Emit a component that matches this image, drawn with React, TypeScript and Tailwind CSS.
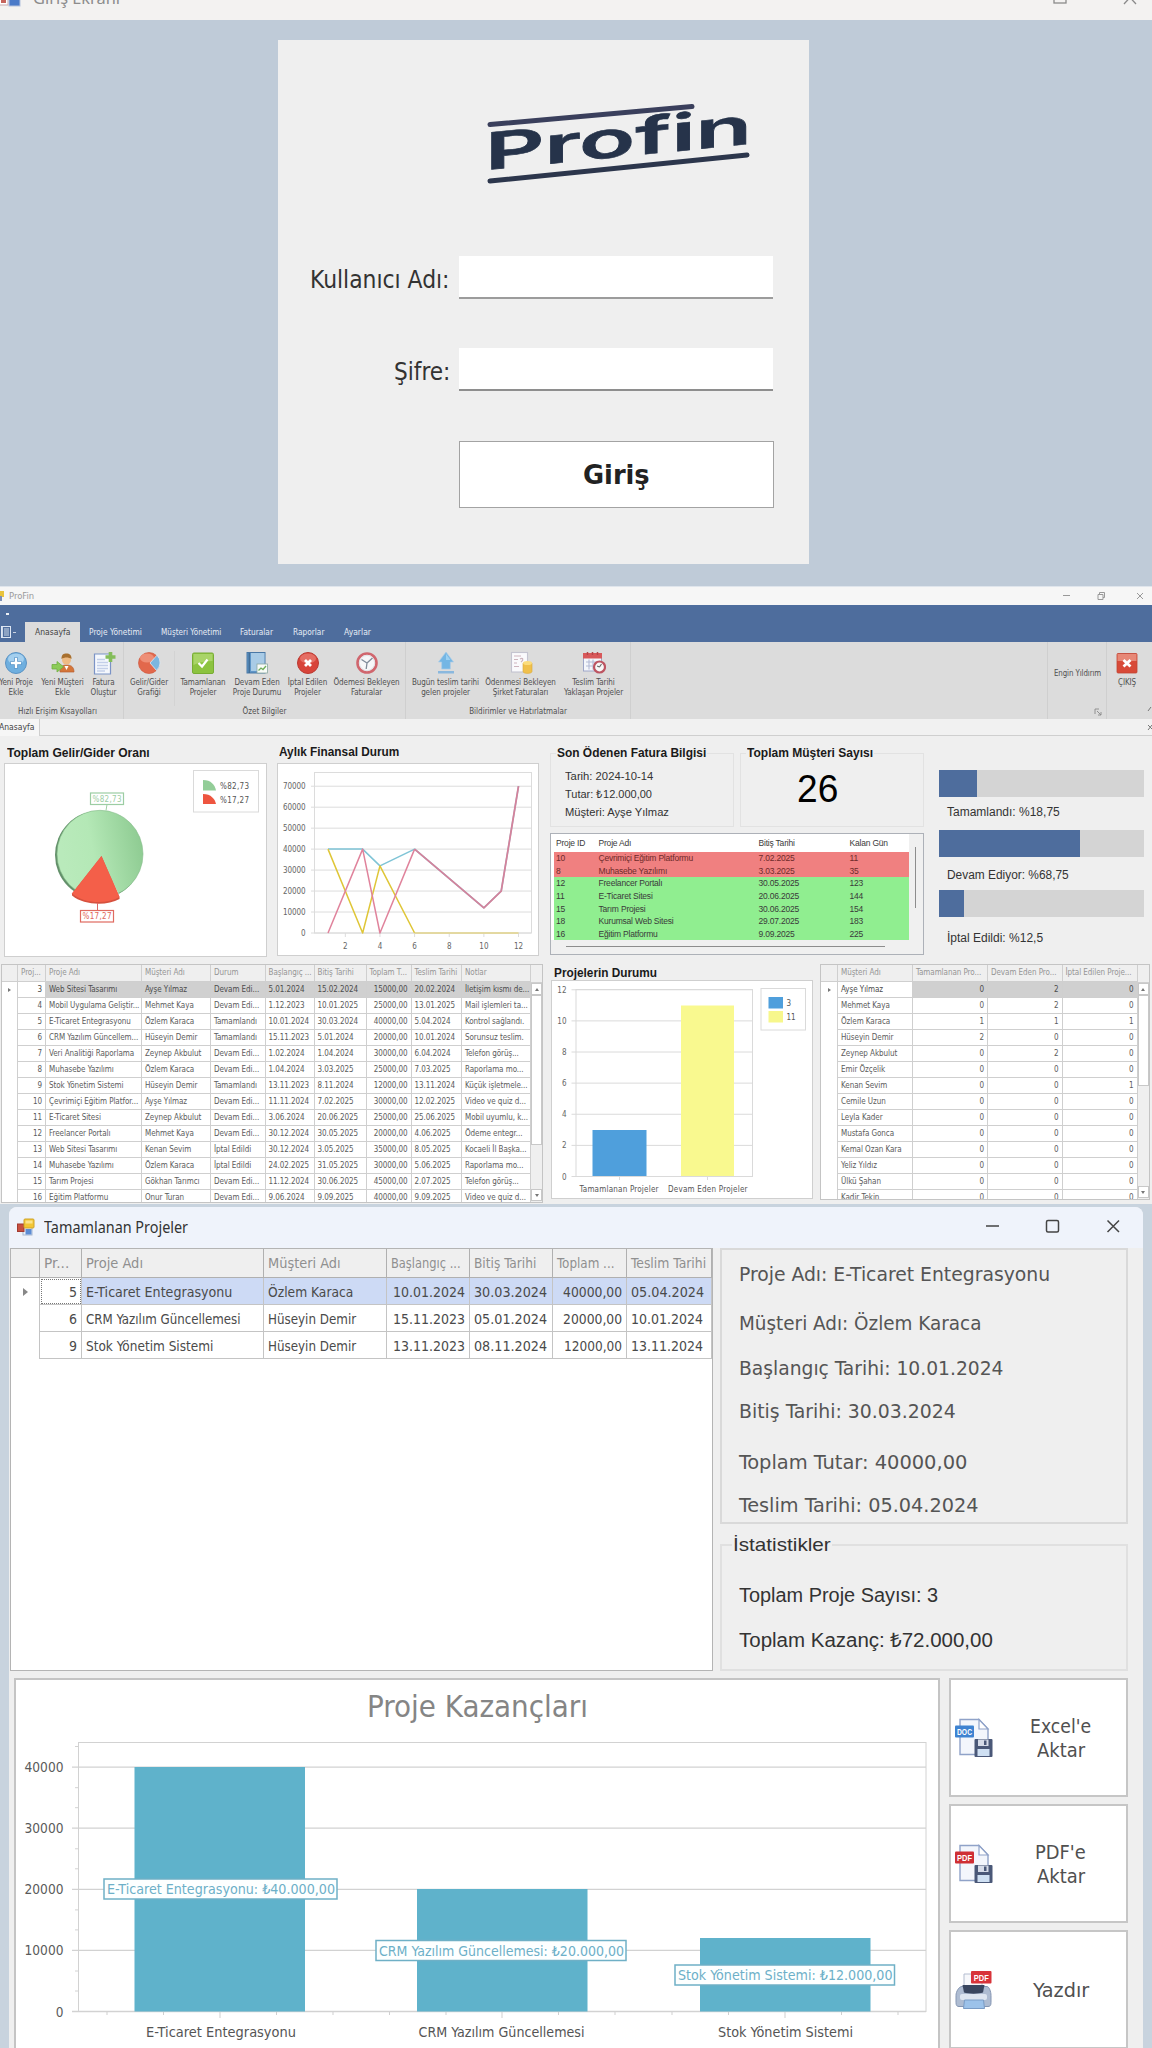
import { useLayoutEffect, useRef, useState, type ReactNode } from "react";

const tahoma = "font-['DejaVu_Sans_Condensed','DejaVu_Sans',sans-serif] [font-stretch:condensed]";
const arial = "font-['Liberation_Sans',Arial,sans-serif]";

/* Text condensed or stretched horizontally to a given width. */
function Fit({ w, className = "", children }: { w: number; className?: string; children: ReactNode }) {
  const ref = useRef<HTMLSpanElement>(null);
  const [scale, setScale] = useState(1);
  useLayoutEffect(() => {
    if (ref.current && ref.current.offsetWidth) setScale(w / ref.current.offsetWidth);
  }, [w]);
  return (
    <span className={`block text-left whitespace-nowrap ${className}`} style={{ width: w }}>
      <span ref={ref} className="inline-block origin-left" style={{ transform: `scaleX(${scale})` }}>
        {children}
      </span>
    </span>
  );
}

/* ------------------------------------------------------------------ icons */

function FormIcon({ size }: { size: number }) {
  return (
    <svg width={size} height={size} viewBox="0 0 18 18" className="shrink-0">
      <rect x="6" y="8" width="9" height="9" fill="#eef2f8" stroke="#a9b8d0" />
      <rect x="8.500" y="11" width="6" height="5.500" fill="#5c8cd4" />
      <rect x="0.500" y="6" width="6.500" height="7.500" fill="#c8503f" stroke="#a23a30" />
      <rect x="7" y="1" width="10" height="9" rx="1" fill="#f3c634" stroke="#cfa42a" />
      <rect x="8.500" y="2.500" width="7" height="3" fill="#fbe38a" />
    </svg>
  );
}

type IconName = "plus" | "user" | "docplus" | "pie" | "check" | "book" | "cancel" | "clock" | "upload" | "doccoin" | "calendar" | "exit";

function RibbonIcon({ name }: { name: IconName }) {
  return (
    <svg width="24" height="24" viewBox="0 0 24 24" className="shrink-0">
      {name === "plus" && (
        <>
          <circle cx="12" cy="12" r="10.500" fill="#6fafdf" stroke="#5b93c4" />
          <ellipse cx="12" cy="8" rx="8" ry="5.500" fill="#b5d9f3" opacity=".75" />
          <path d="M12 6.500v11M6.500 12h11" stroke="#5590c4" strokeWidth="4" />
          <path d="M12 7v10M7 12h10" stroke="#fff" strokeWidth="2.400" />
        </>
      )}
      {name === "user" && (
        <>
          <path d="M9 21c0-6 3-7 6.500-7s7.500 1 7.500 7z" fill="#d5763a" stroke="#b86032" strokeWidth=".7" />
          <path d="M13.500 15h4l-2 4z" fill="#fff" />
          <circle cx="15.500" cy="9" r="4.500" fill="#eebb84" />
          <path d="M10.500 8c0-4.500 2-5.500 5-5.500s5.200 1.500 5 5.500c-3-2-7-2-10 0z" fill="#a8702f" />
          <path d="M1 13.500h5v-3l6.500 5.300L6 21v-3H1z" fill="#8ccb58" stroke="#6fae40" strokeWidth=".8" />
        </>
      )}
      {name === "docplus" && (
        <>
          <path d="M2.500 3h16v20h-16z" fill="#f5f8fd" stroke="#7b93c6" strokeWidth="1.200" />
          <path d="M5 8.500h8M5 11.500h11M5 14.500h11M5 17.500h11M5 20h8" stroke="#c3cfe9" strokeWidth="1.300" />
          <path d="M18.500 1v10M13.500 6h10" stroke="#84bd5a" strokeWidth="3.600" />
        </>
      )}
      {name === "pie" && (
        <>
          <circle cx="12" cy="12" r="10.500" fill="#e2684c" stroke="#cf5a40" strokeWidth=".7" />
          <ellipse cx="10" cy="7" rx="7" ry="4.500" fill="#f3a08a" opacity=".7" />
          <path d="M13 12 20 4.200A10.500 10.500 0 0 1 19.500 19.500z" fill="#7cb6e0" stroke="#dfeaf4" strokeWidth=".8" />
        </>
      )}
      {name === "check" && (
        <>
          <rect x="1.500" y="2" width="21" height="20.500" rx="1.500" fill="#8cc340" stroke="#78ad34" />
          <path d="M2.500 3h19v7c-6 0-13 1-19 4z" fill="#a9d468" />
          <path d="M7.500 12l3.500 3.500L16.500 8.500" fill="none" stroke="#fff" strokeWidth="2.200" />
        </>
      )}
      {name === "book" && (
        <>
          <rect x="2" y="1.500" width="18" height="20.500" fill="#5f96c8" stroke="#4a78a6" />
          <rect x="6" y="2" width="13.500" height="18" fill="#a9cbe6" />
          <path d="M4.200 2v20" stroke="#3f6a92" strokeWidth="1.400" />
          <rect x="12" y="13" width="10.500" height="9" fill="#f8fbf8" stroke="#8aa7a0" strokeWidth=".8" />
          <path d="M13.500 19.500l2.500-2.500 2 1.500 3-3.500" fill="none" stroke="#6fae5a" strokeWidth="1.300" />
        </>
      )}
      {name === "cancel" && (
        <>
          <circle cx="12" cy="12" r="10.500" fill="#d8443a" stroke="#bb3a32" />
          <ellipse cx="12" cy="7.500" rx="8" ry="5" fill="#ee8a80" opacity=".6" />
          <path d="M9 9l6 6M15 9l-6 6" stroke="#fff" strokeWidth="2.800" />
        </>
      )}
      {name === "clock" && (
        <>
          <circle cx="12" cy="12" r="9.500" fill="#f7f7f9" stroke="#d0666e" strokeWidth="2.600" />
          <circle cx="12" cy="12" r="7.600" fill="none" stroke="#d6dae0" strokeWidth=".7" />
          <path d="M12 12L6.500 8.500M12 12l5.500-5M12 12l-.8 6" stroke="#7f8b99" strokeWidth="1.300" />
        </>
      )}
      {name === "upload" && (
        <>
          <path d="M12 1l7.500 10h-3.200V18H7.700v-7H4.500z" fill="#74b6e4" stroke="#a9cce8" strokeWidth=".7" />
          <path d="M12 3l4.500 6H12z" fill="#9bd0f2" />
          <rect x="4" y="20" width="16" height="2.500" fill="#8ab8de" />
        </>
      )}
      {name === "doccoin" && (
        <>
          <rect x="2.500" y="1.500" width="16" height="19.500" fill="#fafafc" stroke="#c4c4d0" strokeWidth="1.100" />
          <path d="M5 5h7M5 8.500h4M5 12h3M5 15.500h5M11 8c3-2 4 1 1 3" stroke="#cdb4bd" strokeWidth="1.200" fill="none" />
          <path d="M14 12v8.500c0 2.500 9 2.500 9 0V12z" fill="#f0c04c" stroke="#d9a83a" strokeWidth=".6" />
          <ellipse cx="18.500" cy="12" rx="4.500" ry="2" fill="#fbdc7c" />
        </>
      )}
      {name === "calendar" && (
        <>
          <rect x="1.500" y="3" width="18" height="17" fill="#f4f6fb" stroke="#9ea6c8" />
          <rect x="1" y="2" width="19" height="5.500" fill="#d8585a" />
          <path d="M5.500 1v3M10.500 1v3M15.500 1v3" stroke="#b34649" strokeWidth="1.500" />
          <path d="M4 11h13M4 15h9M7 8.500v10M11 8.500v10" stroke="#b4bbd6" strokeWidth="1.100" />
          <circle cx="17.500" cy="16" r="5.500" fill="#f7f7f7" stroke="#bd5562" strokeWidth="2.200" />
          <path d="M17.500 16l2-3M17.500 16l-2.400-1" stroke="#666" strokeWidth="1.100" />
        </>
      )}
      {name === "exit" && (
        <>
          <rect x="2" y="2.500" width="20" height="19.500" rx="1" fill="#d84a38" stroke="#c04434" strokeWidth=".8" />
          <path d="M2.500 3h19v7h-19z" fill="#e78877" />
          <path d="M8.500 9l7 6.500M15.500 9l-7 6.500" stroke="#fff" strokeWidth="2.800" />
        </>
      )}
    </svg>
  );
}

function ExportIcon({ kind }: { kind: "DOC" | "PDF" }) {
  return (
    <svg width="40" height="40" viewBox="0 0 40 40" className="shrink-0">
      <path d="M6 1.500h19L34 11v25.500H6z" fill="#f3f6fc" stroke="#8fa2c8" strokeWidth="1.400" />
      <path d="M25 1.500V11h9z" fill="#fff" stroke="#8fa2c8" strokeWidth="1.200" />
      <rect x="1" y="7.500" width="19" height="12" rx="1" fill={kind === "DOC" ? "#3f83d1" : "#cf2f34"} />
      <text x="10.500" y="16.800" textAnchor="middle" textLength="15" lengthAdjust="spacingAndGlyphs" fontSize="9" fontWeight="700" fontFamily="Liberation Sans" fill="#fff">
        {kind}
      </text>
      <rect x="20.500" y="21" width="18" height="18" rx="1" fill="#4a5878" />
      <rect x="24" y="21.500" width="10.500" height="6.500" fill="#d5dbe8" />
      <rect x="30" y="22.500" width="2.500" height="4.500" fill="#4a5878" />
      <rect x="23.500" y="31" width="12" height="7" fill="#cfe0f3" />
    </svg>
  );
}

function PrintIcon() {
  return (
    <svg width="40" height="40" viewBox="0 0 40 40" className="shrink-0">
      <path d="M10 4h18v16H10z" fill="#f7f8fb" stroke="#b4bdd0" />
      <rect x="17" y="1" width="20.500" height="12.500" rx="1" fill="#d8343a" />
      <text x="27.300" y="10.500" textAnchor="middle" textLength="15" lengthAdjust="spacingAndGlyphs" fontSize="9" fontWeight="700" fontFamily="Liberation Sans" fill="#fff">
        PDF
      </text>
      <path d="M8 16.500h25c2 0 4 5 4 9v7c0 3-1 4-3 4H5c-2 0-3-1-3-4v-7c0-4 3-9 6-9z" fill="#aebcd2" stroke="#8495b2" />
      <path d="M8.500 15h22l-1.500 7.500c-4 1.500-15 1.500-19 0z" fill="#39465f" />
      <rect x="6" y="24" width="27" height="6" rx="2" fill="#dde5f0" />
      <path d="M10.500 30h19l1 8.500h-21z" fill="#9cc2ea" stroke="#7a9cc6" />
    </svg>
  );
}

/* ------------------------------------------------------------ login window */

function Logo() {
  return (
    <svg width="270" height="96" viewBox="0 0 270 96">
      <g stroke="#2c364c" strokeWidth="5" strokeLinecap="round">
        <path d="M4 24.500L206 6.500" stroke="#3a3f5c" />
        <path d="M4 81L261 55" />
      </g>
      <g transform="translate(-1 70) skewY(-5.600)">
        <text x="0" y="0" fontFamily="Inter, sans-serif" fontWeight="600" fontSize="51" textLength="267" lengthAdjust="spacingAndGlyphs" fill="#26334a" stroke="#26334a" strokeWidth=".6">
          Profin
        </text>
      </g>
    </svg>
  );
}

function LoginWindow() {
  return (
    <section className="flex h-[586px] flex-col overflow-hidden bg-[#bfcbd8]">
      <header className="flex h-5 shrink-0 items-start justify-between bg-[#f3f2f1]">
        <div className="-mt-[11px] flex items-center text-[#8c8c8c]">
          <div className="-ml-[2px] h-[17px] w-[23px] overflow-hidden">
            <svg width="23" height="17" viewBox="0 0 23 17">
              <rect x="1" y="2" width="9" height="13" fill="#fff" stroke="#c9a9ae" />
              <rect x="3" y="9" width="5" height="4" fill="#c6645c" />
              <rect x="11" y="3" width="11" height="13" fill="#4a7ac8" stroke="#b4c2de" />
            </svg>
          </div>
          <Fit w={87} className="ml-3 text-[16px] leading-[19px] font-['Noto_Sans',sans-serif]">Giriş Ekranı</Fit>
        </div>
        <div className="-mt-[9px] mr-[15px] flex gap-[56px]">
          <svg width="14" height="14" viewBox="0 0 14 14"><rect x="1" y="1" width="12" height="11" fill="none" stroke="#8a8a8a" strokeWidth="1.300" /></svg>
          <svg width="14" height="14" viewBox="0 0 14 14"><path d="M1 0l12 13M13 0L1 13" stroke="#8a8a8a" strokeWidth="1.300" /></svg>
        </div>
      </header>
      <div className={`mt-5 ml-[278px] flex h-[524px] w-[531px] flex-col bg-[#efefef] ${tahoma}`}>
        <div className="mt-[60px] ml-[208px] h-[96px]"><Logo /></div>
        <div className="mt-[60px] ml-[31px] flex h-[43px] items-center">
          <div className="flex w-[150px] justify-start pt-[4px] pl-[1px]">
            <Fit w={140} className="text-[24.500px] leading-[30px] text-[#333]">Kullanıcı Adı:</Fit>
          </div>
          <input className="h-[43px] w-[314px] border-b-2 border-[#9c9c9c] bg-white outline-none" />
        </div>
        <div className="mt-[49px] ml-[31px] flex h-[43px] items-center">
          <div className="flex w-[150px] justify-start pt-[4px] pl-[85px]">
            <Fit w={56} className="text-[24.500px] leading-[30px] text-[#333]">Şifre:</Fit>
          </div>
          <input className="h-[43px] w-[314px] border-b-2 border-[#8e8e8e] bg-white outline-none" />
        </div>
        <button className="mt-[50px] ml-[181px] flex h-[67px] w-[315px] items-center justify-center border border-[#a3a3a3] bg-white pt-[2px]">
          <Fit w={67} className="text-[26px] font-bold text-[#222]">Giriş</Fit>
        </button>
      </div>
    </section>
  );
}

/* ---------------------------------------------------------------- ribbon */

function RibbonItem({ icon, lines, box }: { icon: IconName; lines: string[]; box: string }) {
  return (
    <div className={`flex shrink-0 flex-col items-center ${box}`}>
      <RibbonIcon name={icon} />
      <div className="mt-[3px] flex flex-col items-center text-[8px] leading-[10px] tracking-[-0.08px] whitespace-nowrap">
        {lines.map((l) => <span key={l}>{l}</span>)}
      </div>
    </div>
  );
}

function RibbonGroup({ title, box, children }: { title: string; box: string; children: ReactNode }) {
  return (
    <div className={`flex shrink-0 flex-col border-r border-[#cfcfcf] pt-[9px] ${box}`}>
      <div className="flex h-[55px]">{children}</div>
      <div className="text-center text-[8px] leading-[12px]">{title}</div>
    </div>
  );
}

function Ribbon() {
  return (
    <div className="flex h-[77px] justify-between overflow-hidden bg-[#dcdcdc] text-[#505050]">
      <div className="flex">
        <RibbonGroup title="Hızlı Erişim Kısayolları" box="-ml-[8px] w-[132px]">
          <RibbonItem icon="plus" lines={["Yeni Proje", "Ekle"]} box="w-[48px]" />
          <RibbonItem icon="user" lines={["Yeni Müşteri", "Ekle"]} box="w-[45px]" />
          <RibbonItem icon="docplus" lines={["Fatura", "Oluştur"]} box="w-[37px]" />
        </RibbonGroup>
        <RibbonGroup title="Özet Bilgiler" box="w-[282px]">
          <RibbonItem icon="pie" lines={["Gelir/Gider", "Grafiği"]} box="w-[50px]" />
          <div className="w-px bg-[#d3d3d3]" />
          <RibbonItem icon="check" lines={["Tamamlanan", "Projeler"]} box="w-[56px]" />
          <RibbonItem icon="book" lines={["Devam Eden", "Proje Durumu"]} box="w-[52px]" />
          <RibbonItem icon="cancel" lines={["İptal Edilen", "Projeler"]} box="w-[49px]" />
          <RibbonItem icon="clock" lines={["Ödemesi Bekleyen", "Faturalar"]} box="w-[69px]" />
        </RibbonGroup>
        <RibbonGroup title="Bildirimler ve Hatırlatmalar" box="w-[225px]">
          <RibbonItem icon="upload" lines={["Bugün teslim tarihi", "gelen projeler"]} box="w-[79px]" />
          <RibbonItem icon="doccoin" lines={["Ödenmesi Bekleyen", "Şirket Faturaları"]} box="w-[71px]" />
          <RibbonItem icon="calendar" lines={["Teslim Tarihi", "Yaklaşan Projeler"]} box="w-[75px]" />
        </RibbonGroup>
      </div>
      <div className="flex text-[8px] tracking-[-0.1px]">
        <div className="flex w-[60px] flex-col items-center border-x border-[#cfcfcf] pt-[27px]">
          <Fit w={47} className="leading-[10px]">Engin Yıldırım</Fit>
          <svg width="8" height="8" viewBox="0 0 8 8" className="mt-[29px] mr-[4px] self-end">
            <path d="M1 6V1h4M3 3l4 4M7 4v3H4" fill="none" stroke="#888" strokeWidth=".9" />
          </svg>
        </div>
        <div className="flex w-[40px] flex-col items-center pt-[9px]">
          <RibbonIcon name="exit" />
          <span className="mt-[3px] leading-[10px]">ÇIKIŞ</span>
        </div>
        <svg width="5" height="8" viewBox="0 0 5 8" className="mt-[64px]"><path d="M1 5l3-4" stroke="#777" fill="none" /></svg>
      </div>
    </div>
  );
}

/* ------------------------------------------------------------- dashboard */

const boldTitle = `${arial} text-[12.500px] leading-[14px] font-bold text-[#1a1a1a]`;

function PieChart() {
  return (
    <svg width="261" height="192" viewBox="5 764 261 192" className={tahoma} fontSize="8">
      <defs>
        <linearGradient id="pieGreen" x1="0" x2="1" y1="0.200" y2="0">
          <stop offset="0" stopColor="#b9eabb" />
          <stop offset="0.350" stopColor="#b4e8b6" />
          <stop offset="1" stopColor="#89c78d" />
        </linearGradient>
      </defs>
      <ellipse cx="98.500" cy="855" rx="43.500" ry="44" fill="#63906a" />
      <ellipse cx="100" cy="854" rx="43" ry="43.700" fill="url(#pieGreen)" stroke="#83bb88" strokeWidth=".6" />
      <path d="M101 857L71 896v3h49v-2z" fill="#fff" />
      <path d="M101.500 856L72 893.500v2C84 905.500 107 906 119.500 899v-2z" fill="#d6513e" />
      <path d="M101.500 856L72 893.500C84 904 107 904.500 119.500 897z" fill="#f45f49" />
      <path d="M107 804.500l-1 6" stroke="#9fd0a4" />
      <rect x="90.500" y="793" width="33" height="11.500" fill="#fff" stroke="#9ccda3" strokeWidth="1.200" />
      <text x="92.500" y="801.800" textLength="29" fill="#9ccda3">%82,73</text>
      <path d="M97.500 903v7" stroke="#d66" />
      <rect x="80.500" y="910.500" width="33" height="11.500" fill="#fff" stroke="#e06a60" strokeWidth="1.200" />
      <text x="82.500" y="919.300" textLength="29" fill="#e0675c">%17,27</text>
      <rect x="193.500" y="770.500" width="65" height="41.500" fill="#fff" stroke="#dadada" />
      <path d="M203 780c8 0 12 5 13 10.500h-13z" fill="#93cd98" />
      <path d="M203 794c8 0 12 5 13 10h-13z" fill="#ee5540" />
      <text x="220" y="788.500" textLength="29" fill="#555">%82,73</text>
      <text x="220" y="802.500" textLength="29" fill="#555">%17,27</text>
    </svg>
  );
}

function LineChart() {
  const x = (m: number) => 328 + (m - 1) * 17.32;
  const y = (v: number) => 933 - (v / 10000) * 20.97;
  const path = (p: number[][]) => p.map(([m, v]) => `${x(m)},${y(v)}`).join(" ");
  return (
    <svg width="260" height="190" viewBox="278 764 260 190" className={tahoma} fontSize="8" fill="none">
      <rect x="314.500" y="772.500" width="217" height="160.500" stroke="#dcdcdc" />
      {[0, 1, 2, 3, 4, 5, 6, 7].map((k) => (
        <g key={k}>
          <path d={`M311 ${y(k * 10000)}H531`} stroke="#dcdcdc" />
          <text x={305.500} y={y(k * 10000) + 3} textAnchor="end" fill="#666" letterSpacing="-.1">{k * 10000}</text>
        </g>
      ))}
      {[2, 4, 6, 8, 10, 12].map((m) => (
        <g key={m}>
          <path d={`M${x(m)} 933v4`} stroke="#dcdcdc" />
          <text x={x(m)} y="948.500" textAnchor="middle" fill="#666">{m}</text>
        </g>
      ))}
      <g strokeWidth="1.500" strokeLinejoin="round">
        <polyline points={path([[1, 40000], [3, 40000], [4, 32000], [6, 40000], [10, 12000], [11, 20000], [12, 70000]])} stroke="#7fc4d6" />
        <polyline points={path([[1, 40000], [3, 0], [4, 32000], [6, 0]])} stroke="#dfc637" />
        <path d={`M${x(6)} 933H${x(12)}`} stroke="#e3d48a" />
        <polyline points={path([[1, 0], [3, 40000], [4, 0], [6, 40000]])} stroke="#e0839c" />
        <polyline points={path([[6, 40000], [10, 12000], [11, 20000], [12, 70000]])} stroke="#d5829b" strokeWidth="1.800" />
      </g>
    </svg>
  );
}

function StatusChart() {
  return (
    <svg width="261" height="217" viewBox="551.500 981 261 217" className={tahoma} fontSize="8">
      <rect x="575.500" y="989.500" width="176.500" height="187" fill="#fff" stroke="#dadada" />
      {[0, 2, 4, 6, 8, 10, 12].map((k) => (
        <g key={k}>
          <path d={`M571 ${1176.500 - k * 15.560}H752`} stroke="#dadada" />
          <text x="566" y={1179.500 - k * 15.560} textAnchor="end" fill="#666">{k}</text>
        </g>
      ))}
      <path d="M619 1176v4M707 1176v4" stroke="#dadada" />
      <rect x="592" y="1130" width="54" height="46" fill="#4f9fdc" />
      <rect x="680.500" y="1005.500" width="53" height="170.500" fill="#f9f98f" />
      <text x="579" y="1192" textLength="79" fill="#555">Tamamlanan Projeler</text>
      <text x="667.500" y="1192" textLength="79.500" fill="#555">Devam Eden Projeler</text>
      <rect x="760.500" y="988.500" width="44.500" height="41.500" fill="#fff" stroke="#dadada" />
      <rect x="768" y="997" width="14.500" height="11.500" fill="#4f9fdc" />
      <rect x="768" y="1011" width="14.500" height="11.500" fill="#f7f78c" />
      <text x="786" y="1006" fill="#555">3</text>
      <text x="786" y="1020" fill="#555">11</text>
    </svg>
  );
}

const deadlines = [
  ["10", "Çevrimiçi Eğitim Platformu", "7.02.2025", "11"],
  ["8", "Muhasebe Yazılımı", "3.03.2025", "35"],
  ["12", "Freelancer Portalı", "30.05.2025", "123"],
  ["11", "E-Ticaret Sitesi", "20.06.2025", "144"],
  ["15", "Tarım Projesi", "30.06.2025", "154"],
  ["18", "Kurumsal Web Sitesi", "29.07.2025", "183"],
  ["16", "Eğitim Platformu", "9.09.2025", "225"],
];

function DeadlineList() {
  const cols = "grid grid-cols-[42.500px_160px_91px_1fr]";
  return (
    <div className={`mt-[6px] flex h-[122px] flex-col border border-[#adb1b8] bg-[#f0f0f0] ${arial} text-[8.500px] tracking-[-0.2px] text-[#3a3a3a]`}>
      <div className="flex">
        <div className="w-[358px] bg-white">
          <div className={`${cols} h-[18px] items-center pl-[5px] pt-[1px]`}>
            <span>Proje ID</span><span>Proje Adı</span><span>Bitiş Tarihi</span><span>Kalan Gün</span>
          </div>
          <div className="ml-[3px]">
            {deadlines.map((r, i) => (
              <div key={r[0]} className={`${cols} h-[12.640px] items-center pl-[2px] ${i < 2 ? "bg-[#f08080] text-[#6e2a2a]" : "bg-[#90ee90]"}`}>
                {r.map((c) => <span key={c}>{c}</span>)}
              </div>
            ))}
          </div>
        </div>
        <div className="mt-[13px] ml-[6px] h-[61px] w-px bg-[#8d8d8d]" />
      </div>
      <div className="mt-[6px] ml-[15px] h-px w-[319px] bg-[#8d8d8d]" />
    </div>
  );
}

function Progress({ label, fill, w, gap }: { label: string; fill: string; w: number; gap: string }) {
  return (
    <div className="h-[60px]">
      <div className="h-[27px] bg-[#d4d4d4]"><div className={`h-full bg-[#4e6d9d] ${fill}`} /></div>
      <div className={`ml-[8px] ${gap}`}>
        <Fit w={w} className={`${arial} text-[12px] leading-[14px] text-[#333]`}>{label}</Fit>
      </div>
    </div>
  );
}

const projects = [
  ["3", "Web Sitesi Tasarımı", "Ayşe Yılmaz", "Devam Edi...", "5.01.2024", "15.02.2024", "15000,00", "20.02.2024", "İletişim kısmı de..."],
  ["4", "Mobil Uygulama Geliştir...", "Mehmet Kaya", "Devam Edi...", "1.12.2023", "10.01.2025", "25000,00", "13.01.2025", "Mail işlemleri ta..."],
  ["5", "E-Ticaret Entegrasyonu", "Özlem Karaca", "Tamamlandı", "10.01.2024", "30.03.2024", "40000,00", "5.04.2024", "Kontrol sağlandı."],
  ["6", "CRM Yazılım Güncellem...", "Hüseyin Demir", "Tamamlandı", "15.11.2023", "5.01.2024", "20000,00", "10.01.2024", "Sorunsuz teslim."],
  ["7", "Veri Analitiği Raporlama", "Zeynep Akbulut", "Devam Edi...", "1.02.2024", "1.04.2024", "30000,00", "6.04.2024", "Telefon görüş..."],
  ["8", "Muhasebe Yazılımı", "Özlem Karaca", "Devam Edi...", "1.04.2024", "3.03.2025", "25000,00", "7.03.2025", "Raporlama mo..."],
  ["9", "Stok Yönetim Sistemi", "Hüseyin Demir", "Tamamlandı", "13.11.2023", "8.11.2024", "12000,00", "13.11.2024", "Küçük işletmele..."],
  ["10", "Çevrimiçi Eğitim Platfor...", "Ayşe Yılmaz", "Devam Edi...", "11.11.2024", "7.02.2025", "30000,00", "12.02.2025", "Video ve quiz d..."],
  ["11", "E-Ticaret Sitesi", "Zeynep Akbulut", "Devam Edi...", "3.06.2024", "20.06.2025", "25000,00", "25.06.2025", "Mobil uyumlu, k..."],
  ["12", "Freelancer Portalı", "Mehmet Kaya", "Devam Edi...", "30.12.2024", "30.05.2025", "20000,00", "4.06.2025", "Ödeme entegr..."],
  ["13", "Web Sitesi Tasarımı", "Kenan Sevim", "İptal Edildi", "30.12.2024", "3.05.2025", "35000,00", "8.05.2025", "Kocaeli İl Başka..."],
  ["14", "Muhasebe Yazılımı", "Özlem Karaca", "İptal Edildi", "24.02.2025", "31.05.2025", "30000,00", "5.06.2025", "Raporlama mo..."],
  ["15", "Tarım Projesi", "Gökhan Tarımcı", "Devam Edi...", "11.12.2024", "30.06.2025", "45000,00", "2.07.2025", "Telefon görüş..."],
  ["16", "Eğitim Platformu", "Onur Turan", "Devam Edi...", "9.06.2024", "9.09.2025", "40000,00", "9.09.2025", "Video ve quiz d..."],
];

const customers = [
  ["Ayşe Yılmaz", "0", "2", "0"],
  ["Mehmet Kaya", "0", "2", "0"],
  ["Özlem Karaca", "1", "1", "1"],
  ["Hüseyin Demir", "2", "0", "0"],
  ["Zeynep Akbulut", "0", "2", "0"],
  ["Emir Özçelik", "0", "0", "0"],
  ["Kenan Sevim", "0", "0", "1"],
  ["Cemile Uzun", "0", "0", "0"],
  ["Leyla Kader", "0", "0", "0"],
  ["Mustafa Gonca", "0", "0", "0"],
  ["Kemal Ozan Kara", "0", "0", "0"],
  ["Yeliz Yıldız", "0", "0", "0"],
  ["Ülkü Şahan", "0", "0", "0"],
  ["Kadir Tekin", "0", "0", "0"],
];

function SmallGrid({ head, rows, cols, right, box, thumb }: { head: string[]; rows: string[][]; cols: string; right: number[]; box: string; thumb: string }) {
  const cell = "overflow-hidden border-r border-b border-[#cfcfcf] px-[3px] whitespace-nowrap";
  return (
    <div className={`flex overflow-hidden border border-[#c4c4c4] bg-white text-[8px] tracking-[-0.060px] text-[#5c5c5c] ${box}`}>
      <div className="shrink-0">
        <div className={`grid h-[17px] bg-[#efefef] leading-[15px] text-[#959595] ${cols}`}>
          <span className={cell} />
          {head.map((h) => <span key={h} className={cell}>{h}</span>)}
        </div>
        {rows.map((r, i) => (
          <div key={i} className={`grid h-[16px] leading-[15px] ${cols} ${i === 0 ? "bg-[#d0d0d0] text-[#4c4c4c]" : ""}`}>
            <span className="flex items-center justify-center border-r border-[#cfcfcf] bg-white">
              {i === 0 && <span className="border-y-[2.500px] border-l-[3px] border-y-transparent border-l-[#777]" />}
            </span>
            {r.map((c, j) => (
              <span key={j} className={`${cell} ${right.includes(j) ? "text-right" : ""} ${i === 0 && j === 0 ? "bg-white" : ""}`}>{c}</span>
            ))}
          </div>
        ))}
      </div>
      <div className="flex flex-1 flex-col bg-[#efefef]">
        <div className="h-[18px] border-b border-[#cfcfcf]" />
        <div className="flex h-[12px] shrink-0 items-center justify-center border border-[#c8c8c8] bg-white">
          <span className="border-x-2 border-b-[3px] border-x-transparent border-b-[#777]" />
        </div>
        <div className={`shrink-0 border border-[#c8c8c8] bg-white ${thumb}`} />
        <div className="flex-1" />
        <div className="mb-[1px] flex h-[12px] shrink-0 items-center justify-center border border-[#c8c8c8] bg-white">
          <span className="border-x-2 border-t-[3px] border-x-transparent border-t-[#777]" />
        </div>
      </div>
    </div>
  );
}

function GroupBox({ title, w, box, children }: { title: string; w: number; box: string; children: ReactNode }) {
  return (
    <fieldset className={`min-w-0 border border-[#e2e2e2] ${box}`}>
      <legend className="ml-[5px] bg-[#efefef] px-[1px]"><Fit w={w} className={boldTitle}>{title}</Fit></legend>
      {children}
    </fieldset>
  );
}

function Dashboard() {
  const tabs: [string, number, string][] = [
    ["Proje Yönetimi", 53, "ml-[9px]"],
    ["Müşteri Yönetimi", 60, "ml-[19px]"],
    ["Faturalar", 33, "ml-[19px]"],
    ["Raporlar", 31, "ml-[20px]"],
    ["Ayarlar", 27, "ml-[20px]"],
  ];
  return (
    <section className={`h-[618px] overflow-hidden bg-[#efefef] ${tahoma}`}>
      <header className="flex h-[19px] items-center justify-between border-t border-[#dfe5ec] bg-[#f6f6f6] text-[#9a9a9a]">
        <div className="flex items-center">
          <svg width="6" height="12" viewBox="0 0 6 12"><rect x="-4" y="1" width="8" height="6" fill="#e8c33c" /><rect x="-4" y="6" width="6" height="5" fill="#7c8fb5" /></svg>
          <Fit w={25} className="ml-[3px] text-[9px] leading-[12px]">ProFin</Fit>
        </div>
        <svg width="84" height="10" viewBox="0 0 84 10" fill="none" stroke="#999" className="mr-[6px]">
          <path d="M1 4.500h7M75 2l6 6M81 2l-6 6" />
          <path d="M36 3.500h5v5h-5zM37.500 3V1.500h5v5h-1.500" />
        </svg>
      </header>
      <div className="flex h-[37px] flex-col justify-between bg-[#4e6d9d] text-[8.500px] text-[#e6ecf5]">
        <span className="mt-[8px] ml-[6px] h-[2px] w-[3px] bg-white/90" />
        <div className="flex h-[20px] items-center">
          <div className="flex w-[25px] items-center gap-[2px] pl-[1px]">
            <svg width="10" height="12" viewBox="0 0 10 12"><rect x=".5" y=".5" width="9" height="11" fill="none" stroke="#dde6f3" /><path d="M3 3h5M3 5h5M3 7h5M3 9h5M1.500 1v10" stroke="#dde6f3" strokeWidth=".9" /></svg>
            <span className="h-px w-[3px] bg-white/70" />
          </div>
          <div className="flex h-full w-[55px] items-center justify-center bg-[#dcdcdc] text-[#444]"><Fit w={35}>Anasayfa</Fit></div>
          {tabs.map(([t, w, ml]) => <div key={t} className={ml}><Fit w={w}>{t}</Fit></div>)}
        </div>
      </div>
      <Ribbon />
      <div className="flex h-[17px] justify-between border-b border-[#cfcfcf] bg-[#f1f1f1] text-[#444]">
        <div className="-mb-px h-[17px] w-[40px] border-r border-[#cfcfcf] bg-[#f6f6f6]"><Fit w={35} className="-ml-[1px] text-[8.500px] leading-[17px]">Anasayfa</Fit></div>
        <svg width="5" height="8" viewBox="0 0 5 8" className="mt-[5px]"><path d="M1 1l5 5M5 1L1 6" stroke="#777" /></svg>
      </div>

      <div className="flex h-[221px]">
        <div className="ml-[4px] w-[263px] pt-[10px]">
          <Fit w={143} className={`ml-[3px] ${boldTitle}`}>Toplam Gelir/Gider Oranı</Fit>
          <div className="mt-[3px] h-[194px] border border-[#cfcfcf] bg-white"><PieChart /></div>
        </div>
        <div className="ml-[10px] w-[262px] pt-[9px]">
          <Fit w={120} className={`ml-[2px] ${boldTitle}`}>Aylık Finansal Durum</Fit>
          <div className="mt-[4px] h-[193px] border border-[#cfcfcf] bg-white"><LineChart /></div>
        </div>
        <div className="ml-[11px] w-[374px] pt-[10px]">
          <div className="flex justify-between">
            <GroupBox title="Son Ödenen Fatura Bilgisi" w={149} box="h-[81px] w-[184px]">
              <div className={`ml-[14px] ${arial} text-[11.500px] leading-[18px] text-[#333]`}>
                <Fit w={88} className="mt-[7px]">Tarih: 2024-10-14</Fit>
                <Fit w={87}>Tutar: ₺12.000,00</Fit>
                <Fit w={104}>Müşteri: Ayşe Yılmaz</Fit>
              </div>
            </GroupBox>
            <GroupBox title="Toplam Müşteri Sayısı" w={126} box="h-[81px] w-[184px]">
              <Fit w={41} className={`ml-[56px] mt-[8px] ${arial} text-[38px] leading-[43px] text-black`}>26</Fit>
            </GroupBox>
          </div>
          <DeadlineList />
        </div>
        <div className="ml-[15px] w-[204.500px] pt-[34px]">
          <Progress label="Tamamlandı: %18,75" w={113} fill="w-[18.750%]" gap="mt-[8px]" />
          <Progress label="Devam Ediyor: %68,75" w={122} fill="w-[69%]" gap="mt-[11px]" />
          <Progress label="İptal Edildi: %12,5" w={96} fill="w-[12%]" gap="mt-[14px]" />
        </div>
      </div>

      <div className="flex h-[247px] pt-[7px]">
        <SmallGrid
          head={["Proj...", "Proje Adı", "Müşteri Adı", "Durum", "Başlangıç ...", "Bitiş Tarihi", "Toplam T...", "Teslim Tarihi", "Notlar"]}
          rows={projects}
          cols="grid-cols-[16px_28px_96px_69px_54.500px_49px_52px_45px_50.500px_68.500px]"
          right={[0, 6]}
          box="ml-[1px] h-[239px] w-[542px] [&_.grid]:w-[529px]"
          thumb="h-[150px]"
        />
        <div className="ml-[8px] w-[262px]">
          <Fit w={103} className={`ml-[3px] mt-[2px] ${boldTitle}`}>Projelerin Durumu</Fit>
          <div className="h-[219px] border border-[#cfcfcf] bg-white"><StatusChart /></div>
        </div>
        <SmallGrid
          head={["Müşteri Adı", "Tamamlanan Pro...", "Devam Eden Pro...", "İptal Edilen Proje..."]}
          rows={customers}
          cols="grid-cols-[17px_75px_75px_74.500px_75px]"
          right={[1, 2, 3]}
          box="ml-[7px] h-[236px] w-[330px]"
          thumb="h-[91px]"
        />
      </div>
    </section>
  );
}

/* ----------------------------------------------------- completed projects */

const completed = [
  ["5", "E-Ticaret Entegrasyonu", "Özlem Karaca", "10.01.2024", "30.03.2024", "40000,00", "05.04.2024"],
  ["6", "CRM Yazılım Güncellemesi", "Hüseyin Demir", "15.11.2023", "05.01.2024", "20000,00", "10.01.2024"],
  ["9", "Stok Yönetim Sistemi", "Hüseyin Demir", "13.11.2023", "08.11.2024", "12000,00", "13.11.2024"],
];
const headW = [25, 57, 73, 70, 62, 58, 75];
const cellW = [
  [8, 146, 85, 72, 73, 59, 73],
  [8, 155, 88, 72, 73, 59, 72],
  [8, 127, 88, 72, 73, 58, 72],
];

function CompletedGrid() {
  const cols = "grid grid-cols-[29px_42px_182px_123px_83px_83px_74px_85px]";
  const head = ["Pr...", "Proje Adı", "Müşteri Adı", "Başlangıç ...", "Bitiş Tarihi", "Toplam ...", "Teslim Tarihi"];
  return (
    <div className="h-[423px] w-[703px] border border-[#b4b4b4] bg-white text-[14px] text-[#4a4a4a]">
      <div className={`${cols} h-[29px] border-b border-[#b0b0b0] bg-[#efefef] leading-[29px] text-[#909090]`}>
        <span className="border-r border-[#b0b0b0]" />
        {head.map((h, i) => (
          <span key={h} className="overflow-hidden border-r border-[#b0b0b0] pl-[4px]">
            <Fit w={headW[i]}>{h}</Fit>
          </span>
        ))}
      </div>
      {completed.map((r, i) => (
        <div key={r[0]} className={`${cols} h-[27px] leading-[28px]`}>
          <span className="flex items-center justify-center border-r border-[#c4c4c4]">
            {i === 0 && <span className="border-y-[4px] border-l-[5px] border-y-transparent border-l-[#888]" />}
          </span>
          {r.map((c, j) => (
            <span
              key={j}
              className={`flex overflow-hidden border-r border-b border-[#c4c4c4] px-[4px] ${j === 0 || j === 3 || j === 5 ? "justify-end" : ""} ${i === 0 ? (j === 0 ? "outline-1 -outline-offset-2 outline-dotted outline-[#777]" : "bg-[#cddaf5]") : ""}`}
            >
              <Fit w={cellW[i][j]}>{c}</Fit>
            </span>
          ))}
        </div>
      ))}
    </div>
  );
}

function EarningsChart() {
  const bars = [
    { x: 134.500, top: 1767, bx: 104, bw: 233, by: 1879, t: "E-Ticaret Entegrasyonu: ₺40.000,00", n: "E-Ticaret Entegrasyonu", nx: 146, nw: 150 },
    { x: 417, top: 1889, bx: 376, bw: 250, by: 1940.500, t: "CRM Yazılım Güncellemesi: ₺20.000,00", n: "CRM Yazılım Güncellemesi", nx: 418.500, nw: 166 },
    { x: 700, top: 1938, bx: 675, bw: 219.500, by: 1965, t: "Stok Yönetim Sistemi: ₺12.000,00", n: "Stok Yönetim Sistemi", nx: 718, nw: 135 },
  ];
  return (
    <svg width="923" height="368" viewBox="16 1680 923 368" className={tahoma}>
      <text x="367" y="1717" fontSize="30" textLength="221" lengthAdjust="spacingAndGlyphs" fill="#858585">Proje Kazançları</text>
      <rect x="78.500" y="1742.500" width="847.500" height="269" fill="none" stroke="#d2d2d2" />
      {[0, 1, 2, 3, 4].map((k) => (
        <g key={k}>
          <path d={`M72 ${2011.500 - k * 61.100}H926`} stroke="#d2d2d2" strokeWidth="1.300" />
          <path d={k < 4 ? `M75 ${1991 - k * 61.100}h3M75 ${1971 - k * 61.100}h3` : "M75 1746.500h3"} stroke="#d2d2d2" />
          <text x="63.500" y={2016.500 - k * 61.100} textAnchor="end" fontSize="13.500" textLength={k ? 39 : undefined} lengthAdjust="spacingAndGlyphs" fill="#5a5a5a">
            {k * 10000}
          </text>
        </g>
      ))}
      <path d="M107 2012v3M163.500 2012v3M220 2012v6M276.500 2012v3M333 2012v3M389.500 2012v3M446 2012v3M502 2012v6M558.500 2012v3M615 2012v3M672 2012v3M728.500 2012v3M785 2012v6M841.500 2012v3M898 2012v3" stroke="#cfcfcf" />
      {bars.map((b) => (
        <g key={b.n}>
          <rect x={b.x} y={b.top} width="170.500" height={2011.500 - b.top} fill="#5fb2cb" />
          <rect x={b.bx} y={b.by} width={b.bw} height="20" fill="#fdffff" stroke="#6fb0c6" strokeWidth="1.500" />
          <text x={b.bx + 3} y={b.by + 15} fontSize="13.500" textLength={b.bw - 5} lengthAdjust="spacingAndGlyphs" fill="#6db0c8">{b.t}</text>
          <text x={b.nx} y="2037" fontSize="13.500" textLength={b.nw} lengthAdjust="spacingAndGlyphs" fill="#555">{b.n}</text>
        </g>
      ))}
    </svg>
  );
}

function SideButton({ icon, lines, w }: { icon: ReactNode; lines: string[]; w: number[] }) {
  return (
    <button className="flex h-[119px] w-[179px] shrink-0 items-center border-2 border-[#c6c6c6] bg-white pl-[3px] text-[19.500px] leading-[24px] text-[#505050]">
      {icon}
      <span className="flex flex-1 flex-col items-center pt-[3px] pl-[1px]">
        {lines.map((l, i) => <Fit key={l} w={w[i]}>{l}</Fit>)}
      </span>
    </button>
  );
}

function CompletedWindow() {
  const details: [string, number, string][] = [
    ["Proje Adı: E-Ticaret Entegrasyonu", 311, "mt-[11px]"],
    ["Müşteri Adı: Özlem Karaca", 242, "mt-[23px]"],
    ["Başlangıç Tarihi: 10.01.2024", 264, "mt-[19px]"],
    ["Bitiş Tarihi: 30.03.2024", 217, "mt-[17px]"],
    ["Toplam Tutar: 40000,00", 228, "mt-[25px]"],
    ["Teslim Tarihi: 05.04.2024", 240, "mt-[17px]"],
  ];
  return (
    <section className={`h-[844px] bg-[#c8d3de] pt-[3px] ${tahoma}`}>
      <div className="ml-[9px] flex h-[841px] w-[1134px] flex-col overflow-hidden rounded-t-lg bg-[#efefef]">
        <header className="flex h-[41px] shrink-0 items-center justify-between bg-[#eff3fb] pl-[8px] text-[#333]">
          <div className="flex items-center pb-[2px]">
            <FormIcon size={18} />
            <Fit w={144} className="ml-[9px] font-['Noto_Sans',sans-serif] text-[15.500px] leading-[20px]">Tamamlanan Projeler</Fit>
          </div>
          <svg width="140" height="16" viewBox="983 1217 140 16" fill="none" stroke="#444" strokeWidth="1.500" className="mr-[20px] mb-[4px]">
            <path d="M986 1225h13M1107.500 1219.500l11.500 11.500M1119 1219.500l-11.500 11.500" />
            <rect x="1046.500" y="1219.500" width="12" height="11.500" rx="1.500" />
          </svg>
        </header>
        <div className="flex pl-[1px]">
          <CompletedGrid />
          <div className="ml-[7px] w-[408px]">
            <div className="h-[276px] overflow-hidden border-2 border-[#d9d9d9] pl-[17px] text-[20px] text-[#555]">
              {details.map(([t, w, mt]) => <Fit key={t} w={w} className={`leading-[26px] ${mt}`}>{t}</Fit>)}
            </div>
            <fieldset className={`mt-[10px] h-[137px] border-2 border-[#e0e0e0] ${arial} text-[20px] text-[#333]`}>
              <legend className="ml-[10px] bg-[#efefef] px-[1px]"><Fit w={98} className="text-[19px] leading-[22px]">İstatistikler</Fit></legend>
              <div className="pl-[17px]">
                <Fit w={199} className="mt-[26px] leading-[26px]">Toplam Proje Sayısı: 3</Fit>
                <Fit w={254} className="mt-[19px] leading-[26px]">Toplam Kazanç: ₺72.000,00</Fit>
              </div>
            </fieldset>
          </div>
        </div>
        <div className="mt-[7px] flex h-[370px] pl-[5px]">
          <div className="h-[372px] w-[926px] shrink-0 border-2 border-b-0 border-[#c4c4c4] bg-white"><EarningsChart /></div>
          <div className="ml-[9px] flex flex-col gap-[7px]">
            <SideButton icon={<ExportIcon kind="DOC" />} lines={["Excel'e", "Aktar"]} w={[61, 48]} />
            <SideButton icon={<ExportIcon kind="PDF" />} lines={["PDF'e", "Aktar"]} w={[51, 48]} />
            <SideButton icon={<PrintIcon />} lines={["Yazdır"]} w={[56]} />
          </div>
        </div>
      </div>
    </section>
  );
}

export default function App() {
  return (
    <main className="h-[2048px] w-[1152px] overflow-hidden">
      <LoginWindow />
      <Dashboard />
      <CompletedWindow />
    </main>
  );
}
